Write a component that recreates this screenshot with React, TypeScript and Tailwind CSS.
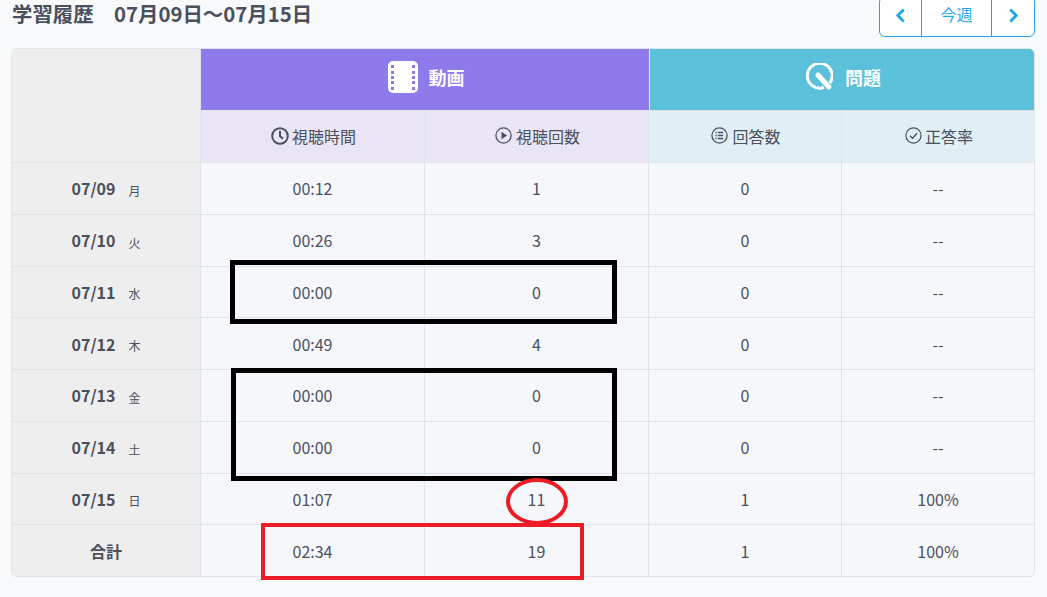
const font = '[font-family:"Noto_Sans_CJK_JP","Noto_Sans",sans-serif]';

const rows = [
  { date: "07/09", day: "月", time: "00:12", views: "1", answers: "0", rate: "--" },
  { date: "07/10", day: "火", time: "00:26", views: "3", answers: "0", rate: "--" },
  { date: "07/11", day: "水", time: "00:00", views: "0", answers: "0", rate: "--" },
  { date: "07/12", day: "木", time: "00:49", views: "4", answers: "0", rate: "--" },
  { date: "07/13", day: "金", time: "00:00", views: "0", answers: "0", rate: "--" },
  { date: "07/14", day: "土", time: "00:00", views: "0", answers: "0", rate: "--" },
  { date: "07/15", day: "日", time: "01:07", views: "11", answers: "1", rate: "100%" },
];

const Cell = ({ children, last }: { children: React.ReactNode; last?: boolean }) => (
  <div
    className={`flex items-center justify-center border-t border-[#dde5ea] bg-[#f5f7fb] text-[16px] text-[#4b5063] ${
      last ? "" : "border-r"
    }`}
  >
    {children}
  </div>
);

const DayCell = ({ children }: { children: React.ReactNode }) => (
  <div className="flex items-center justify-center border-t border-r border-[#dde5ea] bg-[#eeeeee] text-[16px] font-bold text-[#4b4f5c]">
    {children}
  </div>
);

const ClockIcon = () => (
  <svg width="18" height="18" viewBox="0 0 18 18" fill="none" stroke="#4b5060" strokeWidth="2">
    <circle cx="9" cy="9" r="7.8" />
    <path d="M9 4v5.2l3 2.4" />
  </svg>
);

const PlayIcon = () => (
  <svg width="17" height="17" viewBox="0 0 17 17" fill="none" stroke="#4b5060" strokeWidth="1.3">
    <circle cx="8.5" cy="8.5" r="7.6" />
    <path d="M6.5 4.8l5.6 3.7-5.6 3.7z" fill="#4b5060" stroke="none" />
  </svg>
);

const ListIcon = () => (
  <svg width="17" height="17" viewBox="0 0 17 17" fill="none" stroke="#4b5060" strokeWidth="1.3">
    <circle cx="8.5" cy="8.5" r="7.6" />
    <path d="M6.8 5.5h5.4M6.8 8.5h5.4M6.8 11.5h5.4" strokeWidth="1.5" />
    <path d="M4.4 5.5h1.2M4.4 8.5h1.2M4.4 11.5h1.2" strokeWidth="1.5" />
  </svg>
);

const CheckIcon = () => (
  <svg width="17" height="17" viewBox="0 0 17 17" fill="none" stroke="#4b5060" strokeWidth="1.2">
    <circle cx="8.5" cy="8.5" r="7.6" />
    <path d="M5 8.8l2.5 2.4 4.5-5" strokeWidth="1.4" />
  </svg>
);

const FilmIcon = () => (
  <svg width="30" height="32" viewBox="0 0 30 32">
    <rect width="30" height="32" rx="5" fill="#ffffff" />
    <g fill="#8f7aec">
      <rect x="3" y="4" width="3" height="3" />
      <rect x="3" y="10" width="3" height="3" />
      <rect x="3" y="15" width="3" height="3" />
      <rect x="3" y="20" width="3" height="3" />
      <rect x="3" y="26" width="3" height="3" />
      <rect x="24" y="4" width="3" height="3" />
      <rect x="24" y="10" width="3" height="3" />
      <rect x="24" y="15" width="3" height="3" />
      <rect x="24" y="20" width="3" height="3" />
      <rect x="24" y="26" width="3" height="3" />
    </g>
  </svg>
);

const QuestionIcon = () => (
  <svg width="28" height="28" viewBox="0 0 28 28" fill="none" stroke="#ffffff">
    <path d="M19 24.4A12.4 12.4 0 1 1 24.8 20" strokeWidth="3" />
    <path d="M13 12l11 12" strokeWidth="5" strokeLinecap="round" />
  </svg>
);

export default function App() {
  return (
    <div className={`relative h-[597px] w-[1047px] overflow-hidden bg-[#f8f9fa] ${font}`}>
      <div className="flex h-[48px] items-start justify-between pl-3 pr-3">
        <h2 className="text-[20.4px] leading-[26px] font-bold text-[#4a4f5e]">学習履歴　07月09日〜07月15日</h2>
        <div className="-mt-1 flex h-[41px] w-[156px] rounded-[6px] border border-[#1fa4e8] bg-white text-[16px] text-[#1fa4e8]">
          <div className="flex w-[42px] items-center justify-center border-r border-[#1fa4e8] pb-[3px]">
            <svg width="11" height="15" viewBox="0 0 10 14" fill="none" stroke="#1fa4e8" strokeWidth="2.6">
              <path d="M8 1.5L2.5 7 8 12.5" />
            </svg>
          </div>
          <div className="flex flex-1 items-center justify-center pb-[5px]">今週</div>
          <div className="flex w-[43px] items-center justify-center border-l border-[#1fa4e8] pb-[3px]">
            <svg width="11" height="15" viewBox="0 0 10 14" fill="none" stroke="#1fa4e8" strokeWidth="2.6">
              <path d="M2 1.5L7.5 7 2 12.5" />
            </svg>
          </div>
        </div>
      </div>

      <div className="mx-[11px] grid h-[529px] w-[1024px] grid-cols-[189px_224px_224px_193px_192px] grid-rows-[61px_52px_repeat(8,minmax(0,1fr))] overflow-hidden rounded-[6px] border border-[#dde5ea]">
        <div className="row-span-2 border-r border-[#dde5ea] bg-[#eeeeee]" />
        <div className="col-span-2 flex items-center justify-center gap-[11px] bg-[#8f7aec] pb-[5px] pl-[2px] text-[18px] font-bold text-white">
          <FilmIcon />
          動画
        </div>
        <div className="col-span-2 flex items-center justify-center gap-[12px] border-l border-[#e6eef2] bg-[#5bc0da] pb-[5px] pl-[2px] text-[18px] font-bold text-white">
          <QuestionIcon />
          問題
        </div>

        <div className="flex items-center justify-center gap-[3px] border-t border-r border-[#dde5ea] bg-[#e9e5f6] pb-[2px] pl-[2px] text-[16px] text-[#4b5060]">
          <ClockIcon />
          視聴時間
        </div>
        <div className="flex items-center justify-center gap-[4px] border-t border-r border-[#dde5ea] bg-[#e9e5f6] pb-[2px] pl-[2px] text-[16px] text-[#4b5060]">
          <PlayIcon />
          視聴回数
        </div>
        <div className="flex items-center justify-center gap-[4px] border-t border-r border-[#dde5ea] bg-[#e0eff4] pb-[2px] pl-[2px] text-[16px] text-[#4b5060]">
          <ListIcon />
          回答数
        </div>
        <div className="flex items-center justify-center gap-[3px] border-t border-[#dde5ea] bg-[#e0eff4] pb-[2px] pl-[2px] text-[16px] text-[#4b5060]">
          <CheckIcon />
          正答率
        </div>

        {rows.map((r) => (
          <div key={r.date} className="contents">
            <DayCell>
              {r.date}
              <span className="ml-[13px] mt-[5px] text-[12px] font-normal">{r.day}</span>
            </DayCell>
            <Cell>{r.time}</Cell>
            <Cell>{r.views}</Cell>
            <Cell>{r.answers}</Cell>
            <Cell last>{r.rate}</Cell>
          </div>
        ))}

        <DayCell>合計</DayCell>
        <Cell>02:34</Cell>
        <Cell>19</Cell>
        <Cell>1</Cell>
        <Cell last>100%</Cell>
      </div>

      {/* 手書きの注釈 */}
      <div className="absolute left-[230px] top-[260px] h-[64px] w-[387px] border-[5px] border-black" />
      <div className="absolute left-[231px] top-[368px] h-[113px] w-[386px] border-[5px] border-black" />
      <div className="absolute left-[506px] top-[478px] h-[47px] w-[62px] rounded-[50%] border-[4px] border-[#ed1c24]" />
      <div className="absolute left-[261px] top-[523px] h-[57px] w-[323px] border-[4px] border-[#ed1c24]" />
    </div>
  );
}
